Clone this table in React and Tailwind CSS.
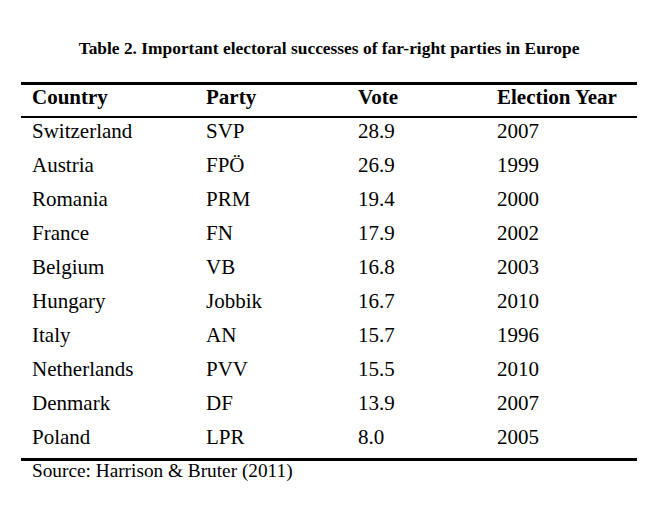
const rows = [
  ["Switzerland", "SVP", "28.9", "2007"],
  ["Austria", "FPÖ", "26.9", "1999"],
  ["Romania", "PRM", "19.4", "2000"],
  ["France", "FN", "17.9", "2002"],
  ["Belgium", "VB", "16.8", "2003"],
  ["Hungary", "Jobbik", "16.7", "2010"],
  ["Italy", "AN", "15.7", "1996"],
  ["Netherlands", "PVV", "15.5", "2010"],
  ["Denmark", "DF", "13.9", "2007"],
  ["Poland", "LPR", "8.0", "2005"],
];

const cols = "grid grid-cols-[174px_152px_139px_1fr] pl-[11px]";

const App = () => {
  return (
    <div className="w-[658px] h-[510px] bg-white text-black font-['Liberation_Serif','Times_New_Roman',serif]">
      <h1 className="pt-[38px] text-center text-[17.4px] font-bold leading-[20px]">
        Table 2. Important electoral successes of far-right parties in Europe
      </h1>
      <div className="mx-[21px] mt-[24px] w-[616px]">
        <div className={`${cols} border-t-[3px] border-b-[2px] border-black h-[36px] pb-[8px] items-center text-[21px] font-bold leading-[24px]`}>
          <div>Country</div>
          <div>Party</div>
          <div>Vote</div>
          <div>Election Year</div>
        </div>
        <div className="border-b-[3px] border-black">
          {rows.map((r, i) => (
            <div key={i} className={`${cols} h-[34px] pb-[8px] items-center text-[21px] leading-[24px]`}>
              {r.map((c, j) => (
                <div key={j}>{c}</div>
              ))}
            </div>
          ))}
        </div>
        <div className="pl-[11px] text-[19.3px] leading-[20px]">Source: Harrison &amp; Bruter (2011)</div>
      </div>
    </div>
  );
};

export default App;
